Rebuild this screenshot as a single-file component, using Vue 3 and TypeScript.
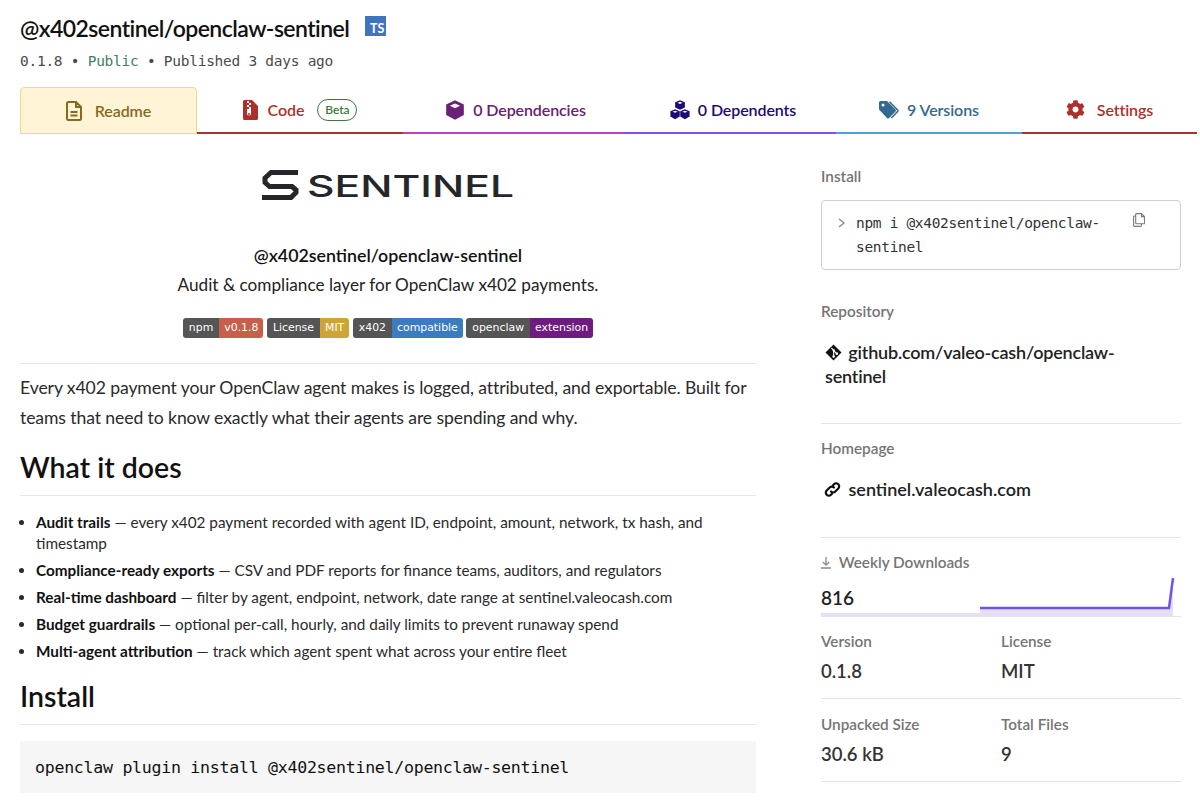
<script setup lang="ts">
type Tab = { label: string; cls: string; path: string; vb: string }

const tabs: Tab[] = [
  { label: '0 Dependencies', cls: 'deps', vb: '0 0 512 512', path: 'M256 6 L482 112 V385 L256 506 L30 385 V112 Z M256 92 L125 150 L256 208 L387 150 Z' },
  { label: '0 Dependents', cls: 'dependents', vb: '0 0 512 512', path: 'M256 6 L380 56 V195 L256 250 L132 195 V56 Z M256 44 L190 72 L256 100 L322 72 Z M130 235 L250 285 V425 L130 490 L10 425 V285 Z M130 272 L66 298 L130 324 L194 298 Z M382 235 L502 285 V425 L382 490 L262 425 V285 Z M382 272 L318 298 L382 324 L446 298 Z' },
]

const listItems = [
  { strong: 'Audit trails', text: ' — every x402 payment recorded with agent ID, endpoint, amount, network, tx hash, and timestamp' },
  { strong: 'Compliance-ready exports', text: ' — CSV and PDF reports for finance teams, auditors, and regulators' },
  { strong: 'Real-time dashboard', text: ' — filter by agent, endpoint, network, date range at sentinel.valeocash.com' },
  { strong: 'Budget guardrails', text: ' — optional per-call, hourly, and daily limits to prevent runaway spend' },
  { strong: 'Multi-agent attribution', text: ' — track which agent spent what across your entire fleet' },
]

const badges = [
  { l: 'npm', r: 'v0.1.8', c: '#c7604a' },
  { l: 'License', r: 'MIT', c: '#cfa437' },
  { l: 'x402', r: 'compatible', c: '#3b7cc0' },
  { l: 'openclaw', r: 'extension', c: '#6f1c80' },
]
</script>

<template>
  <div class="page">
    <header class="head">
      <div class="title-row">
        <h1>@x402sentinel/openclaw-sentinel</h1>
        <span class="ts">TS</span>
      </div>
      <div class="meta">0.1.8 • <span class="public">Public</span> • Published 3 days ago</div>
    </header>

    <nav class="tabs">
      <div class="tab readme">
        <svg width="16" height="20" viewBox="0 0 16 20" fill="none" stroke="currentColor" stroke-width="2">
          <path d="M2.500 1h7.500l5 5v11.500a1.500 1.500 0 0 1-1.500 1.500h-11A1.500 1.500 0 0 1 1 17.500v-15A1.500 1.500 0 0 1 2.500 1zM10 1v5h5M4.500 11h7M4.500 14.500h7" />
        </svg>
        <span>Readme</span>
      </div>
      <div class="tab code">
        <svg width="15" height="20" viewBox="0 0 15 20">
          <path fill="currentColor" d="M0 1.500A1.500 1.500 0 0 1 1.500 0H9l6 6v12.500a1.500 1.500 0 0 1-1.500 1.500h-12A1.500 1.500 0 0 1 0 18.500z" />
          <path fill="#fff" d="M4 1h2v2H4zM6 3h2v2H6zM4 5h2v2H4zM6 7h2v2H6zM4 9h4v4.500a2 2 0 0 1-4 0z" />
          <circle cx="6" cy="14" r="1" fill="currentColor" />
        </svg>
        <span>Code</span>
        <span class="beta">Beta</span>
      </div>
      <div v-for="t in tabs" :key="t.label" class="tab" :class="t.cls">
        <svg width="20" height="20" :viewBox="t.vb"><path fill="currentColor" fill-rule="evenodd" :d="t.path" /></svg>
        <span>{{ t.label }}</span>
      </div>
      <div class="tab versions">
        <svg width="20" height="18" viewBox="0 0 20 18">
          <path fill="currentColor" fill-rule="evenodd" d="M0 1.500A1.500 1.500 0 0 1 1.500 0H8l8.500 8.500a1.500 1.500 0 0 1 0 2.100l-6.400 6.400a1.500 1.500 0 0 1-2.100 0L0 8.500zM4 2.500a1.500 1.500 0 1 0 0 3 1.500 1.500 0 0 0 0-3z" />
          <path fill="none" stroke="currentColor" stroke-width="1.500" d="M10.500.7l8.300 8.500a1 1 0 0 1 0 1.100l-6.500 6.700" />
        </svg>
        <span>9 Versions</span>
      </div>
      <div class="tab settings">
        <svg width="19" height="19" viewBox="0 0 512 512">
          <path fill="currentColor" d="M487.400 315.700l-42.600-24.600c4.300-23.200 4.300-47 0-70.200l42.600-24.600c4.900-2.800 7.100-8.600 5.500-14-11.100-35.600-30-67.800-54.700-94.600-3.800-4.100-10-5.100-14.800-2.300L380.800 110c-17.900-15.400-38.500-27.300-60.800-35.100V25.800c0-5.600-3.900-10.500-9.400-11.700-36.700-8.200-74.300-7.800-109.200 0-5.500 1.200-9.400 6.100-9.400 11.700V75c-22.200 7.900-42.800 19.800-60.800 35.100L88.700 85.500c-4.900-2.800-11-1.900-14.800 2.300-24.700 26.700-43.600 58.900-54.700 94.600-1.700 5.400.6 11.200 5.500 14L67.300 221c-4.300 23.200-4.300 47 0 70.200l-42.600 24.600c-4.900 2.800-7.100 8.600-5.500 14 11.100 35.600 30 67.800 54.700 94.600 3.800 4.100 10 5.100 14.800 2.300l42.600-24.600c17.900 15.400 38.500 27.300 60.800 35.100v49.200c0 5.600 3.900 10.500 9.400 11.700 36.700 8.200 74.300 7.800 109.200 0 5.500-1.200 9.400-6.100 9.400-11.700v-49.200c22.200-7.900 42.800-19.800 60.800-35.100l42.600 24.600c4.900 2.800 11 1.900 14.800-2.300 24.700-26.700 43.600-58.900 54.700-94.600 1.500-5.500-.7-11.300-5.600-14.100zM256 336c-44.100 0-80-35.900-80-80s35.900-80 80-80 80 35.900 80 80-35.900 80-80 80z" />
        </svg>
        <span>Settings</span>
      </div>
    </nav>

    <div class="columns">
      <main class="readme-body">
        <div class="center">
          <svg class="logo" width="252" height="32" viewBox="0 0 252 32">
            <path fill="none" stroke="#25262a" stroke-width="5" d="M36 2.500H9L3 8v4.500l4.500 4h22.500l4 3.500v2.500L29 27.500H0" />
            <text x="45" y="27" font-family="Inter, sans-serif" font-weight="500" font-size="30" fill="#25262a" textLength="207" lengthAdjust="spacingAndGlyphs">SENTINEL</text>
          </svg>
          <div class="pkg">@x402sentinel/openclaw-sentinel</div>
          <div class="tagline">Audit &amp; compliance layer for OpenClaw x402 payments.</div>
          <div class="badges">
            <span v-for="b in badges" :key="b.l" class="badge">
              <span class="bl">{{ b.l }}</span><span class="br" :style="{ background: b.c }">{{ b.r }}</span>
            </span>
          </div>
        </div>
        <p class="intro">Every x402 payment your OpenClaw agent makes is logged, attributed, and exportable. Built for teams that need to know exactly what their agents are spending and why.</p>
        <h2>What it does</h2>
        <ul>
          <li v-for="item in listItems" :key="item.strong"><strong>{{ item.strong }}</strong>{{ item.text }}</li>
        </ul>
        <h2 class="second">Install</h2>
        <pre class="code-box">openclaw plugin install @x402sentinel/openclaw-sentinel</pre>
      </main>

      <aside class="side">
        <h3>Install</h3>
        <div class="install">
          <svg class="chev" width="8" height="10" viewBox="0 0 8 10" fill="none" stroke="#8a8a8a" stroke-width="1.300"><path d="M1 1l5 4-5 4" /></svg>
          <code>npm i @x402sentinel/openclaw-sentinel</code>
          <svg class="copy" width="12" height="14" viewBox="0 0 12 14" fill="none" stroke="#7a7a7a" stroke-width="1.100">
            <path d="M3.500.6h5l3 3v6.400a.8.8 0 0 1-.8.8H3.500a.8.8 0 0 1-.8-.8V1.400a.8.8 0 0 1 .8-.8zM8.500.6v3h3M2.700 3H1.400a.8.8 0 0 0-.8.800v8.800a.8.8 0 0 0 .8.800h6.300a.8.8 0 0 0 .8-.8v-1.800" />
          </svg>
        </div>

        <h3 class="repo-label">Repository</h3>
        <div class="link repo">
          <svg width="17" height="17" viewBox="0 0 17 17">
            <path fill="#111" fill-rule="evenodd" d="M8.500.5l8 8-8 8-8-8zM6.800 3.600l1.600 1.600a1.300 1.300 0 0 1 1.500 1.700l1.500 1.500a1.300 1.300 0 1 1-.8.800L9.200 7.800v3.500a1.300 1.300 0 1 1-1.100 0V7.600a1.300 1.300 0 0 1-.5-1.700L6 4.400z" />
          </svg>
          github.com/valeo-cash/openclaw-sentinel
        </div>

        <div class="rule"></div>
        <h3>Homepage</h3>
        <div class="link home">
          <svg width="17" height="17" viewBox="0 0 17 17" fill="none" stroke="#111" stroke-width="2.200" stroke-linecap="round">
            <path d="M7 10.500a3 3 0 0 0 4.300 0l3-3a3 3 0 0 0-4.300-4.300l-1 1" />
            <path d="M10 6.500a3 3 0 0 0-4.300 0l-3 3a3 3 0 0 0 4.300 4.300l1-1" />
          </svg>
          sentinel.valeocash.com
        </div>

        <div class="rule"></div>
        <h3 class="dl">
          <svg width="10" height="12" viewBox="0 0 10 12" fill="none" stroke="#8a8a8a" stroke-width="1.300"><path d="M5 0v8M1.800 5L5 8.200 8.200 5M0 11h10" /></svg>
          Weekly Downloads
        </h3>
        <div class="downloads">
          <span class="num">816</span>
          <svg class="spark" width="360" height="42" viewBox="0 0 360 42">
            <path fill="#e6dffa" d="M0 39h159V34h189l4-30v38H0z" />
            <path fill="none" stroke="#7152ec" stroke-width="2.500" d="M159 34h189l4-30" />
          </svg>
        </div>

        <div class="stats">
          <div><h3>Version</h3><div class="val">0.1.8</div></div>
          <div><h3>License</h3><div class="val">MIT</div></div>
        </div>
        <div class="stats last">
          <div><h3>Unpacked Size</h3><div class="val">30.6 kB</div></div>
          <div><h3>Total Files</h3><div class="val">9</div></div>
        </div>
      </aside>
    </div>
  </div>
</template>

<style>
html, body { margin: 0; background: #fff; overflow: hidden; }
</style>

<style scoped>
.page {
  height: 800px;
  overflow: hidden;
  font-family: Lato, "Open Sans", sans-serif;
  color: #1f1f1f;
  box-sizing: border-box;
  padding: 11px 3px 0 20px;
}
.title-row { display: flex; align-items: flex-start; height: 34px; }
h1 {
  margin: 0;
  font-size: 23px;
  line-height: 34px;
  font-weight: 600;
  letter-spacing: -0.55px;
  color: #111;
}
.ts {
  margin: 5px 0 0 16px;
  width: 21px;
  height: 20px;
  background: #3e75bc;
  color: #fff;
  font-size: 12.500px;
  line-height: 12px;
  font-weight: 700;
  display: flex;
  align-items: flex-end;
  justify-content: flex-end;
  padding: 0 2px 1px 0;
  box-sizing: border-box;
}
.meta {
  margin-top: 7px;
  font-family: "DejaVu Sans Mono", monospace;
  font-size: 14.500px;
  line-height: 18px;
  color: #4b4b4b;
  letter-spacing: -0.270px;
}
.public { color: #3f8060; }

.tabs {
  margin-top: 17px;
  display: grid;
  grid-template-columns: 177px 206px 222px 211px 186px 175px;
  height: 47px;
  font-size: 16px;
  font-weight: 600;
  letter-spacing: -0.100px;
}
.tab {
  display: flex;
  align-items: center;
  justify-content: center;
  gap: 8px;
  border-bottom: 2px solid;
}
.readme { background: #fff4d6; color: #866a1f; border: 1px solid #f2d78a; border-radius: 4px 4px 0 0; gap: 13px; }
.code { color: #ac312c; border-color: #ac312c; gap: 10px; }
.beta {
  margin-left: 3px;
  border: 1px solid #3b7a3b;
  color: #3b7a3b;
  border-radius: 12px;
  font-size: 12px;
  line-height: 20px;
  padding: 0 7px;
}
.deps { color: #6a2074; border-color: #c23ec9; padding-left: 3px; }
.dependents { color: #1d0a73; border-color: #7c4dff; padding-left: 5px; }
.versions { color: #33698f; border-color: #4aa3dc; }
.settings { color: #ab322c; border-color: #ab322c; gap: 12px; }

.columns { display: flex; }
.readme-body { width: 736px; flex: none; }
.center { text-align: center; padding-top: 36px; border-bottom: 1px solid #e4e4e4; height: 230px; box-sizing: border-box; }
.logo { display: block; margin: 0 auto; overflow: visible; }
.pkg { margin-top: 41px; font-size: 17.800px; font-weight: 600; line-height: 24px; color: #111; }
.tagline { margin-top: 6px; font-size: 17.200px; line-height: 24px; color: #222; }
.badges { margin-top: 21px; display: flex; justify-content: center; gap: 3.500px; }
.badge {
  display: inline-flex;
  height: 20px;
  line-height: 20px;
  border-radius: 3px;
  overflow: hidden;
  font-family: "DejaVu Sans", sans-serif;
  font-size: 10.900px;
  color: #fff;
}
.bl { background: #555; padding: 0 6px; }
.br { padding: 0 5px; }
.intro { margin: 9px 0 0; font-size: 17.600px; letter-spacing: -0.100px; line-height: 30px; color: #2a2a2a; }
h2 {
  margin: 14px 0 0;
  font-size: 28.500px;
  line-height: 40px;
  font-weight: 600;
  color: #111;
  padding-bottom: 8px;
  border-bottom: 1px solid #e6e6e6;
}
ul { margin: 16px 0 0; padding: 0 0 0 16px; font-size: 15.300px; line-height: 21px; color: #2a2a2a; }
li { margin-bottom: 6px; }
strong { font-weight: 700; color: #111; }
.second { margin-top: 14px; }
.code-box {
  margin: 16px 0 0;
  background: #f6f6f6;
  padding: 15px 15px 0;
  font-family: "DejaVu Sans Mono", monospace;
  font-size: 16.600px;
  line-height: 24px;
  color: #111;
  height: 52px;
  box-sizing: border-box;
  letter-spacing: -0.280px;
}

.side { width: 360px; margin-left: 65px; padding-top: 31px; flex: none; }
h3 { margin: 0; font-size: 15.300px; line-height: 22px; font-weight: 600; color: #757575; }
.install {
  position: relative;
  margin-top: 13px;
  border: 1px solid #cfcfcf;
  border-radius: 4px;
  height: 70px;
  box-sizing: border-box;
  padding: 10px 60px 0 34px;
  font-family: "DejaVu Sans Mono", monospace;
  font-size: 14.500px;
  line-height: 24px;
  color: #333;
  letter-spacing: -0.320px;
}
.install code { font-family: inherit; }
.chev { position: absolute; left: 16px; top: 17px; }
.copy { position: absolute; right: 35px; top: 12px; }
.repo-label { margin-top: 30px; }
.link { font-size: 18px; font-weight: 600; line-height: 24px; color: #222; }
.link svg { vertical-align: -2px; }
.repo { margin-top: 18px; margin-left: 4px; max-width: 300px; letter-spacing: -0.200px; }
.repo svg { margin-right: 2px; }
.home svg { margin-right: 3px; }
.rule { height: 1px; background: #e4e4e4; }
.repo + .rule { margin-top: 35px; margin-bottom: 13px; }
.home { margin-top: 18px; margin-left: 3px; }
.home + .rule { margin-top: 36px; margin-bottom: 13px; }
.dl svg { margin-right: 4px; vertical-align: -1px; }
.downloads {
  position: relative;
  height: 43px;
  border-bottom: 1px solid #e4e4e4;
}
.num { position: absolute; left: 0; top: 13px; font-size: 19px; font-weight: 600; line-height: 24px; }
.spark { position: absolute; left: 0; top: 1px; }
.stats {
  display: grid;
  grid-template-columns: 180px 180px;
  height: 82px;
  padding-top: 13px;
  box-sizing: border-box;
  border-bottom: 1px solid #e4e4e4;
}
.stats.last { height: 83px; padding-top: 14px; }
.val { margin-top: 7px; font-size: 18.500px; font-weight: 600; line-height: 24px; color: #333; }
</style>
